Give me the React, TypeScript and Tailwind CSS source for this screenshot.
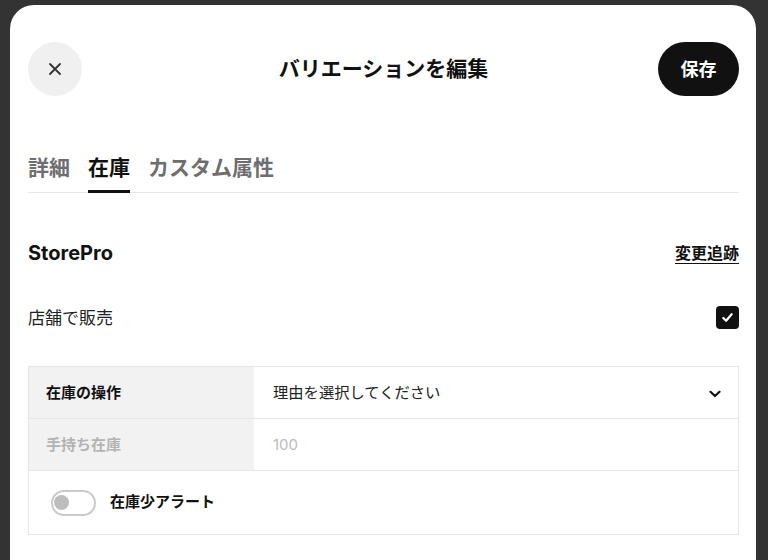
export default function App() {
  return (
    <div className="h-[560px] overflow-hidden bg-[#333333] pl-[10px] pr-[12px] pt-[5px] font-['Inter','Noto_Sans_CJK_JP',sans-serif] text-[#111]">
      <div className="h-[600px] rounded-t-[24px] bg-white pl-[18px] pr-[17px] pt-[37px]">
        {/* header */}
        <div className="grid h-[54px] grid-cols-[1fr_auto_1fr] items-center">
          <button className="flex size-[54px] items-center justify-center justify-self-start rounded-full bg-[#f0f0f0]">
            <svg width="14" height="14" viewBox="0 0 14 14" fill="none" stroke="#333" strokeWidth="1.8" strokeLinecap="round">
              <path d="M2 2l10 10M12 2L2 12" />
            </svg>
          </button>
          <h1 className="text-[21px] font-bold">バリエーションを編集</h1>
          <button className="h-[54px] w-[81px] justify-self-end rounded-full bg-[#111] text-[18px] font-bold text-white">
            保存
          </button>
        </div>

        {/* tabs */}
        <div className="mt-[58px] flex gap-[18px] border-b border-[#e8e8e8]">
          <div className="-mb-px border-b-[3px] border-transparent pb-[8px] text-[21px] font-bold leading-[28px] text-[#6e6e6e]">
            詳細
          </div>
          <div className="-mb-px border-b-[3px] border-[#111] pb-[8px] text-[21px] font-bold leading-[28px] text-[#111]">
            在庫
          </div>
          <div className="-mb-px border-b-[3px] border-transparent pb-[8px] text-[21px] font-bold leading-[28px] text-[#6e6e6e]">
            カスタム属性
          </div>
        </div>

        {/* store */}
        <div className="mt-[46px] flex h-[28px] items-center justify-between">
          <div className="text-[20px] font-bold">StorePro</div>
          <a className="text-[16px] font-bold underline underline-offset-4">変更追跡</a>
        </div>

        <div className="mt-[36px] flex h-[28px] items-center justify-between">
          <div className="pt-[3px] text-[17px] text-[#222]">店舗で販売</div>
          <div className="flex size-[23px] items-center justify-center rounded-[4px] bg-[#111]">
            <svg width="13" height="13" viewBox="0 0 14 14" fill="none" stroke="white" strokeWidth="2.4" strokeLinecap="round" strokeLinejoin="round">
              <path d="M2.5 7.5l3 3 6-7" />
            </svg>
          </div>
        </div>

        {/* inventory table */}
        <div className="mt-[35px] border border-[#e6e6e6]">
          <div className="grid h-[52px] grid-cols-[225px_1fr] border-b border-[#e6e6e6]">
            <div className="flex items-center bg-[#f2f2f2] pl-[17px] pt-[2px] text-[15px] font-bold">在庫の操作</div>
            <div className="flex items-center justify-between pl-[19px] pr-[17px] pt-[2px] text-[15.3px] text-[#222]">
              <span>理由を選択してください</span>
              <svg width="12" height="8" viewBox="0 0 12 8" fill="none" stroke="#111" strokeWidth="2.2" strokeLinecap="round" strokeLinejoin="round">
                <path d="M1.5 1.8L6 6l4.5-4.2" />
              </svg>
            </div>
          </div>
          <div className="grid h-[52px] grid-cols-[225px_1fr] border-b border-[#e6e6e6]">
            <div className="flex items-center bg-[#f2f2f2] pl-[17px] pt-[2px] text-[15px] font-bold text-[#b3b3b3]">手持ち在庫</div>
            <div className="flex items-center pl-[19px] pt-[2px] text-[15px] text-[#bbbbbb]">100</div>
          </div>
          <div className="flex h-[63px] items-center pl-[22px]">
            <div className="flex h-[26px] w-[45px] items-center rounded-full border-2 border-[#cacaca] pl-[1px]">
              <div className="size-[15px] rounded-full bg-[#bdbdbd]" />
            </div>
            <span className="ml-[14px] text-[15px] font-bold">在庫少アラート</span>
          </div>
        </div>
      </div>
    </div>
  );
}
